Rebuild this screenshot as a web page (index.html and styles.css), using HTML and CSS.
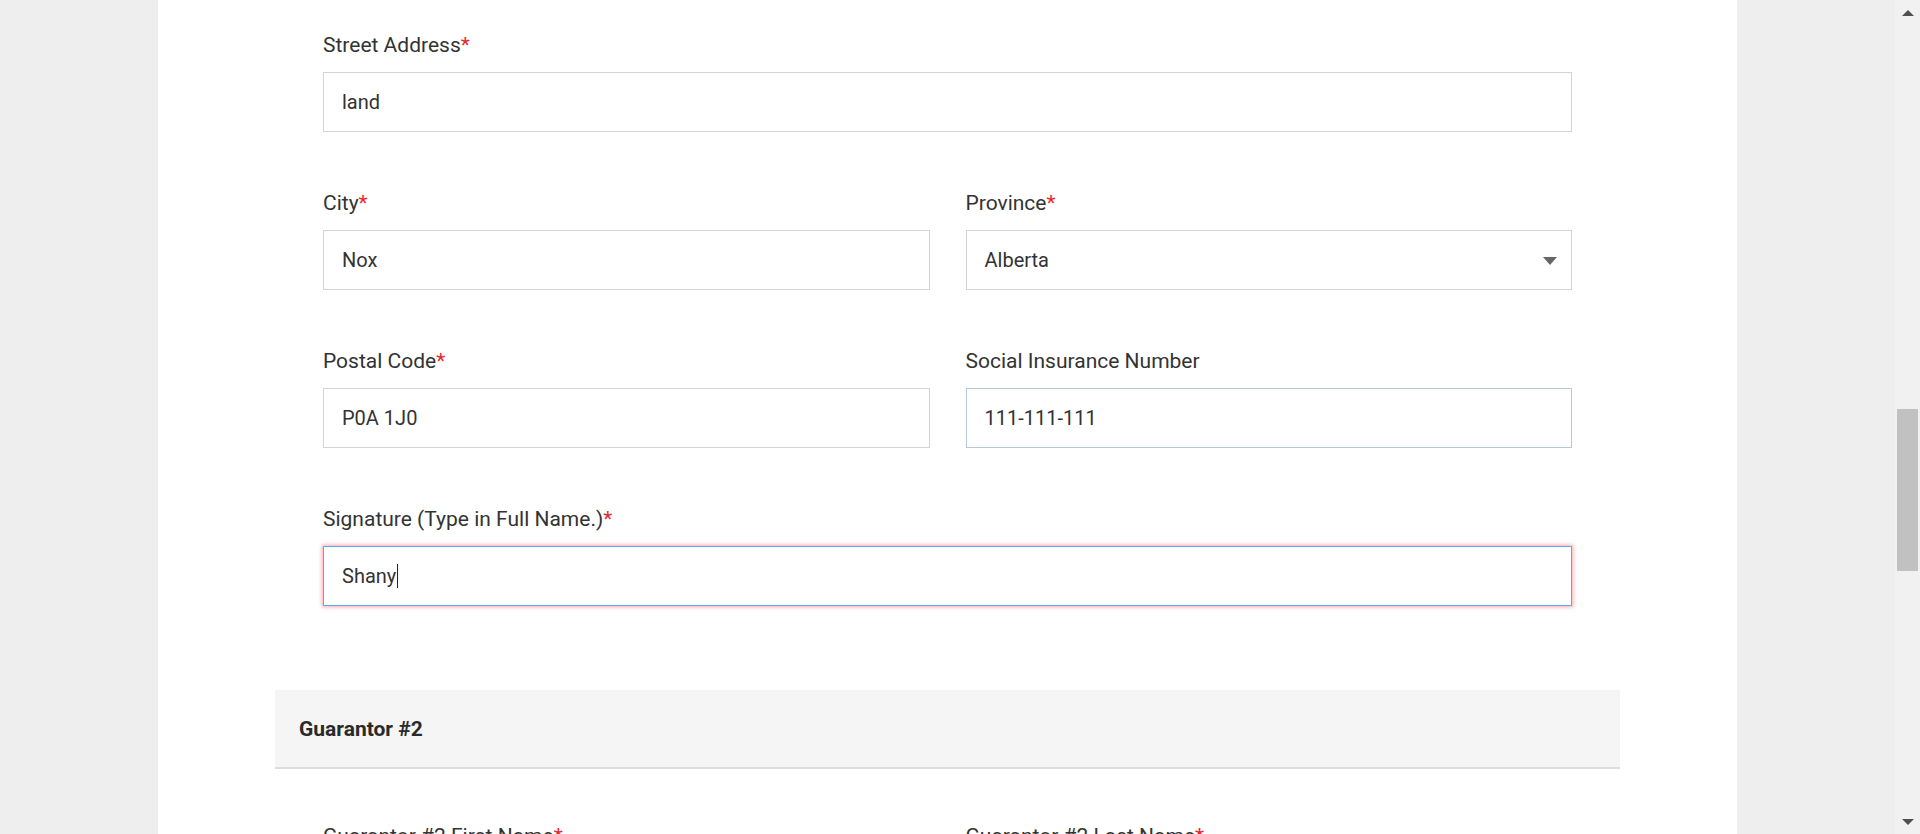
FILE: index.html
```html
<!DOCTYPE html>
<html lang="en">
<head>
<meta charset="utf-8">
<title>Guarantor Form</title>
<link rel="stylesheet" href="styles.css">
</head>
<body>
  <div class="page">
    <div class="panel">
      <div class="fields">
        <div class="field">
          <label class="label">Street Address<span class="req">*</span></label>
          <div class="input">land</div>
        </div>
        <div class="row">
          <div class="field">
            <label class="label">City<span class="req">*</span></label>
            <div class="input">Nox</div>
          </div>
          <div class="field">
            <label class="label">Province<span class="req">*</span></label>
            <div class="input select">Alberta<span class="arrow"></span></div>
          </div>
        </div>
        <div class="row">
          <div class="field">
            <label class="label">Postal Code<span class="req">*</span></label>
            <div class="input">P0A 1J0</div>
          </div>
          <div class="field">
            <label class="label">Social Insurance Number</label>
            <div class="input input-hover">111-111-111</div>
          </div>
        </div>
        <div class="field">
          <label class="label">Signature (Type in Full Name.)<span class="req">*</span></label>
          <div class="input input-focus">Shany<span class="caret"></span></div>
        </div>
      </div>
      <div class="section-head">Guarantor #2</div>
      <div class="fields fields-next">
        <div class="row">
          <div class="field">
            <label class="label">Guarantor #2 First Name<span class="req">*</span></label>
          </div>
          <div class="field">
            <label class="label">Guarantor #2 Last Name<span class="req">*</span></label>
          </div>
        </div>
      </div>
    </div>
  </div>
  <div class="scrollbar">
    <div class="sb-arrow sb-up"></div>
    <div class="sb-track"><div class="sb-thumb"></div></div>
    <div class="sb-arrow sb-down"></div>
  </div>
</body>
</html>
```
FILE: styles.css
```css
html, body {
  margin: 0;
  padding: 0;
  height: 834px;
  overflow: hidden;
}
body {
  display: flex;
  font-family: Roboto, "Liberation Sans", Arial, sans-serif;
  color: #333333;
  background: #eeeeee;
}
.page {
  flex: 1;
  display: flex;
  justify-content: center;
  background: #eeeeee;
}
.panel {
  width: 1579px;
  background: #ffffff;
  padding: 0 117px;
  box-sizing: border-box;
}
.fields {
  padding: 33px 48px 25px 48px;
}
.fields-next {
  padding-top: 55px;
}
.row {
  display: grid;
  grid-template-columns: 1fr 1fr;
  column-gap: 36px;
}
.field {
  display: flex;
  flex-direction: column;
  margin-bottom: 59px;
}
.label {
  display: block;
  font-size: 21px;
  line-height: 24px;
  color: #333333;
  margin-bottom: 15px;
}
.req {
  color: #e8262d;
}
.input {
  position: relative;
  height: 60px;
  box-sizing: border-box;
  border: 1px solid #d3d3d3;
  padding: 0 18px;
  display: flex;
  align-items: center;
  font-size: 20px;
  color: #333333;
  background: #ffffff;
}
.input-hover {
  border-color: #b6c9da;
}
.input-focus {
  border-color: #5aa6f2;
  box-shadow: 0 0 4px 1px rgba(255, 80, 100, 0.5);
}
.caret {
  display: inline-block;
  width: 1px;
  height: 24px;
  background: #222222;
  margin-left: 1px;
}
.arrow {
  position: absolute;
  right: 14px;
  top: 26px;
  width: 0;
  height: 0;
  border-left: 7px solid transparent;
  border-right: 7px solid transparent;
  border-top: 8px solid #666666;
}
.section-head {
  height: 77px;
  background: #f5f5f5;
  border-bottom: 2px solid #dddddd;
  padding-left: 24px;
  display: flex;
  align-items: center;
  font-size: 21px;
  font-weight: bold;
  color: #2a2a2a;
}
.scrollbar {
  width: 25px;
  height: 834px;
  background: #f1f1f1;
  display: flex;
  flex-direction: column;
}
.sb-arrow {
  height: 25px;
  display: flex;
  justify-content: center;
  align-items: center;
}
.sb-up::before {
  content: "";
  border-left: 6px solid transparent;
  border-right: 6px solid transparent;
  border-bottom: 6px solid #505050;
}
.sb-down::before {
  content: "";
  border-left: 6px solid transparent;
  border-right: 6px solid transparent;
  border-top: 6px solid #505050;
}
.sb-track {
  flex: 1;
  padding: 0 2px;
}
.sb-thumb {
  margin-top: 384px;
  height: 162px;
  background: #c1c1c1;
}
```
